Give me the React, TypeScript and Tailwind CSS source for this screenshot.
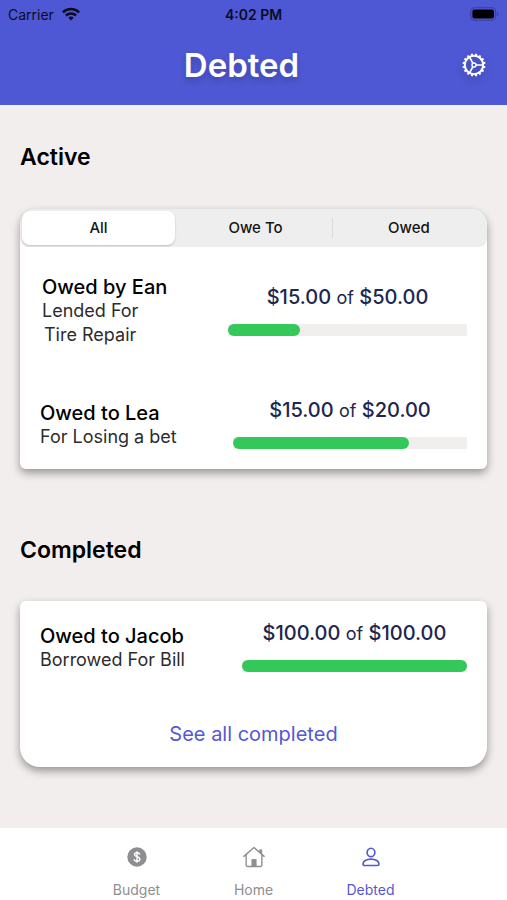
import { useState } from 'react'

type Debt = {
  title: string
  note: string[]
  paid: number
  total: number
  infoClass: string
}

const activeDebts: Debt[] = [
  { title: 'Owed by Ean', note: ['Lended For', 'Tire Repair'], paid: 15, total: 50, infoClass: 'w-[188px] pl-0.5' },
  { title: 'Owed to Lea', note: ['For Losing a bet'], paid: 15, total: 20, infoClass: 'w-[193px]' },
]

const completedDebts: Debt[] = [
  { title: 'Owed to Jacob', note: ['Borrowed For Bill'], paid: 100, total: 100, infoClass: 'w-[202px]' },
]

const tabs = ['All', 'Owe To', 'Owed']

const teeth = Array.from({ length: 16 }, (_, i) => i * 22.5)

function WifiIcon() {
  return (
    <svg viewBox="0 0 18 14" className="h-3.5 w-[18px]" fill="none" stroke="currentColor" strokeWidth="2.5" aria-hidden="true">
      <path d="M0.9 5.3a11.6 11.6 0 0 1 16.2 0" />
      <path d="M3.9 8.5a7.4 7.4 0 0 1 10.2 0" />
      <path d="M9 13.4 6.3 10.7a3.9 3.9 0 0 1 5.4 0z" fill="currentColor" stroke="none" />
    </svg>
  )
}

function BatteryIcon() {
  return (
    <svg viewBox="0 0 29 14" className="h-3.5 w-[29px]" aria-hidden="true">
      <rect x="0.7" y="0.7" width="25" height="12.6" rx="3.8" fill="none" stroke="#383f9c" strokeWidth="1.1" />
      <rect x="2.4" y="2.4" width="21.6" height="9.2" rx="2" fill="#000" />
      <path d="M27 4.8v4.4c1.8-.8 1.8-3.6 0-4.4z" fill="#383f9c" />
    </svg>
  )
}

function GearIcon() {
  return (
    <svg viewBox="0 0 24 24" className="size-6" fill="none" stroke="currentColor" strokeWidth="2" aria-hidden="true">
      <circle cx="12" cy="12" r="9.2" />
      <circle cx="12" cy="12" r="2" strokeWidth="1.5" />
      <path d="M14 12h7M11 10.3 7.5 4.2M11 13.7l-3.5 6.1" strokeWidth="1.7" />
      {teeth.map((deg) => (
        <path key={deg} d="M12 0.5v2.3" strokeWidth="2" transform={`rotate(${deg + 11.25} 12 12)`} />
      ))}
    </svg>
  )
}

function BudgetIcon() {
  return (
    <svg viewBox="0 0 24 24" className="size-6" fill="none" aria-hidden="true">
      <circle cx="12" cy="12" r="10.6" fill="currentColor" />
      <path d="M14.9 9.3c-.2-1.3-1.3-2-2.9-2s-2.8.8-2.8 2.1c0 3 5.9 1.6 5.9 5 0 1.4-1.3 2.3-3.1 2.3s-3-.9-3.1-2.3M12 5.7v12.6" stroke="#fff" strokeWidth="1.5" />
    </svg>
  )
}

function HomeIcon() {
  return (
    <svg viewBox="0 0 24 24" className="size-6" fill="none" stroke="currentColor" strokeWidth="1.5" strokeLinejoin="round" strokeLinecap="round" aria-hidden="true">
      <path d="M0.9 11.3 12 1.7l11.1 9.6" />
      <path d="M3.4 9.4v11.4c0 .9.6 1.5 1.5 1.5h14.2c.9 0 1.5-.6 1.5-1.5V9.4" />
      <path d="M18.2 4h2.4v5l-2.4-2z" fill="currentColor" strokeWidth="0.6" />
      <path d="M9.2 22.3v-8h5.6v8z" fill="currentColor" stroke="none" />
    </svg>
  )
}

function PersonIcon() {
  return (
    <svg viewBox="0 0 24 24" className="size-6" fill="none" stroke="currentColor" strokeWidth="1.8" aria-hidden="true">
      <ellipse cx="12" cy="7" rx="4.2" ry="4.6" />
      <path d="M3.3 19.7c0-3 3.5-5.4 8.7-5.4s8.7 2.4 8.7 5.4c0 1.1-.6 1.6-1.7 1.6H5c-1.1 0-1.7-.5-1.7-1.6z" />
    </svg>
  )
}

function DebtRow({ debt }: { debt: Debt }) {
  return (
    <li className="flex items-center px-5">
      <div className={`${debt.infoClass} shrink-0`}>
        <h3 className="text-[20px] leading-6 font-medium text-black">{debt.title}</h3>
        {debt.note.map((line, i) => (
          <p key={line} className={`text-[18px] leading-6 whitespace-nowrap text-[#2c2c2e] ${i > 0 ? 'pl-0.5' : ''}`}>{line}</p>
        ))}
      </div>
      <div className="flex-1 pb-1">
        <p className="text-center text-[20px] leading-7 font-medium whitespace-nowrap text-[#20264f]">
          ${debt.paid.toFixed(2)} <span className="text-[18px] font-normal">of</span> ${debt.total.toFixed(2)}
        </p>
        <div role="progressbar" aria-label={debt.title} aria-valuenow={debt.paid} aria-valuemax={debt.total} className="mt-3 h-3 bg-[#f1efee]">
          <div className="h-full rounded-full bg-[#34c759]" style={{ width: `${(debt.paid / debt.total) * 100}%` }} />
        </div>
      </div>
    </li>
  )
}

export default function App() {
  const [tab, setTab] = useState('All')

  const shown = activeDebts.filter((d) => {
    if (tab === 'Owe To') return d.title.startsWith('Owed to')
    if (tab === 'Owed') return d.title.startsWith('Owed by')
    return true
  })

  return (
    <div className="flex min-h-screen flex-col bg-[#f2eeed] font-['Inter',sans-serif]">
      <header className="bg-[#4e58d4]">
        <div className="grid h-7 grid-cols-3 items-center px-2 text-[14px] text-[#0b0c1f]">
          <div className="flex items-center gap-2">
            <span>Carrier</span>
            <WifiIcon />
          </div>
          <span className="text-center font-semibold">4:02 PM</span>
          <div className="flex justify-end"><BatteryIcon /></div>
        </div>
        <div className="flex h-[77px] items-center px-[21px] pb-[3px] text-white">
          <h1 className="flex-1 text-center text-[33px] leading-10 font-semibold text-shadow-[0_4px_6px_rgb(0_0_0/0.2)]">Debted</h1>
          <button type="button" aria-label="Settings" className="drop-shadow-[0_4px_4px_rgb(0_0_0/0.2)]"><GearIcon /></button>
        </div>
      </header>

      <main className="flex-1 px-5 pt-9 pb-8">
        <h2 className="text-[23px] leading-8 font-semibold text-black">Active</h2>
        <section className="mt-9 rounded-t-2xl rounded-b-md bg-white pb-4 shadow-[0_4px_8px_rgb(0_0_0/0.38)]">
          <div role="tablist" className="flex h-[38px] rounded-t-2xl rounded-b-lg bg-[#eeeeee] p-0.5">
            {tabs.map((name, i) => (
              <div key={name} className={`flex flex-1 items-center ${i === 0 ? 'pr-1' : ''}`}>
                {i === 2 && <span className="h-5 w-px bg-[#dcdcdc]" />}
                <button
                  type="button"
                  role="tab"
                  aria-selected={tab === name}
                  onClick={() => setTab(name)}
                  className={`h-full flex-1 text-[15px] font-medium text-[#141414] ${tab === name ? 'rounded-lg bg-white shadow-[0_1px_2px_rgb(0_0_0/0.2)]' : ''}`}
                >
                  {name}
                </button>
              </div>
            ))}
          </div>
          <ul className="flex flex-col gap-[49px] pt-7">
            {shown.map((debt) => <DebtRow key={debt.title} debt={debt} />)}
          </ul>
        </section>

        <h2 className="mt-[65px] text-[23px] leading-8 font-semibold text-black">Completed</h2>
        <section className="mt-[35px] rounded-t-md rounded-b-[20px] bg-white pt-[18px] pb-[18px] shadow-[0_4px_8px_rgb(0_0_0/0.38)]">
          <ul>
            {completedDebts.map((debt) => <DebtRow key={debt.title} debt={debt} />)}
          </ul>
          <div className="mt-11 text-center leading-7">
            <a href="#completed" className="text-[20px] text-[#5558d3]">See all completed</a>
          </div>
        </section>
      </main>

      <nav className="flex h-[72px] justify-center bg-white pt-[18px] text-[14px] leading-5 text-[#8e8e90]">
        <a href="#budget" className="flex w-[117px] flex-col items-center gap-3"><BudgetIcon />Budget</a>
        <a href="#home" className="flex w-[117px] flex-col items-center gap-3"><HomeIcon />Home</a>
        <a href="#debted" aria-current="page" className="flex w-[117px] flex-col items-center gap-3 text-[#5558d3]"><PersonIcon />Debted</a>
      </nav>
    </div>
  )
}
